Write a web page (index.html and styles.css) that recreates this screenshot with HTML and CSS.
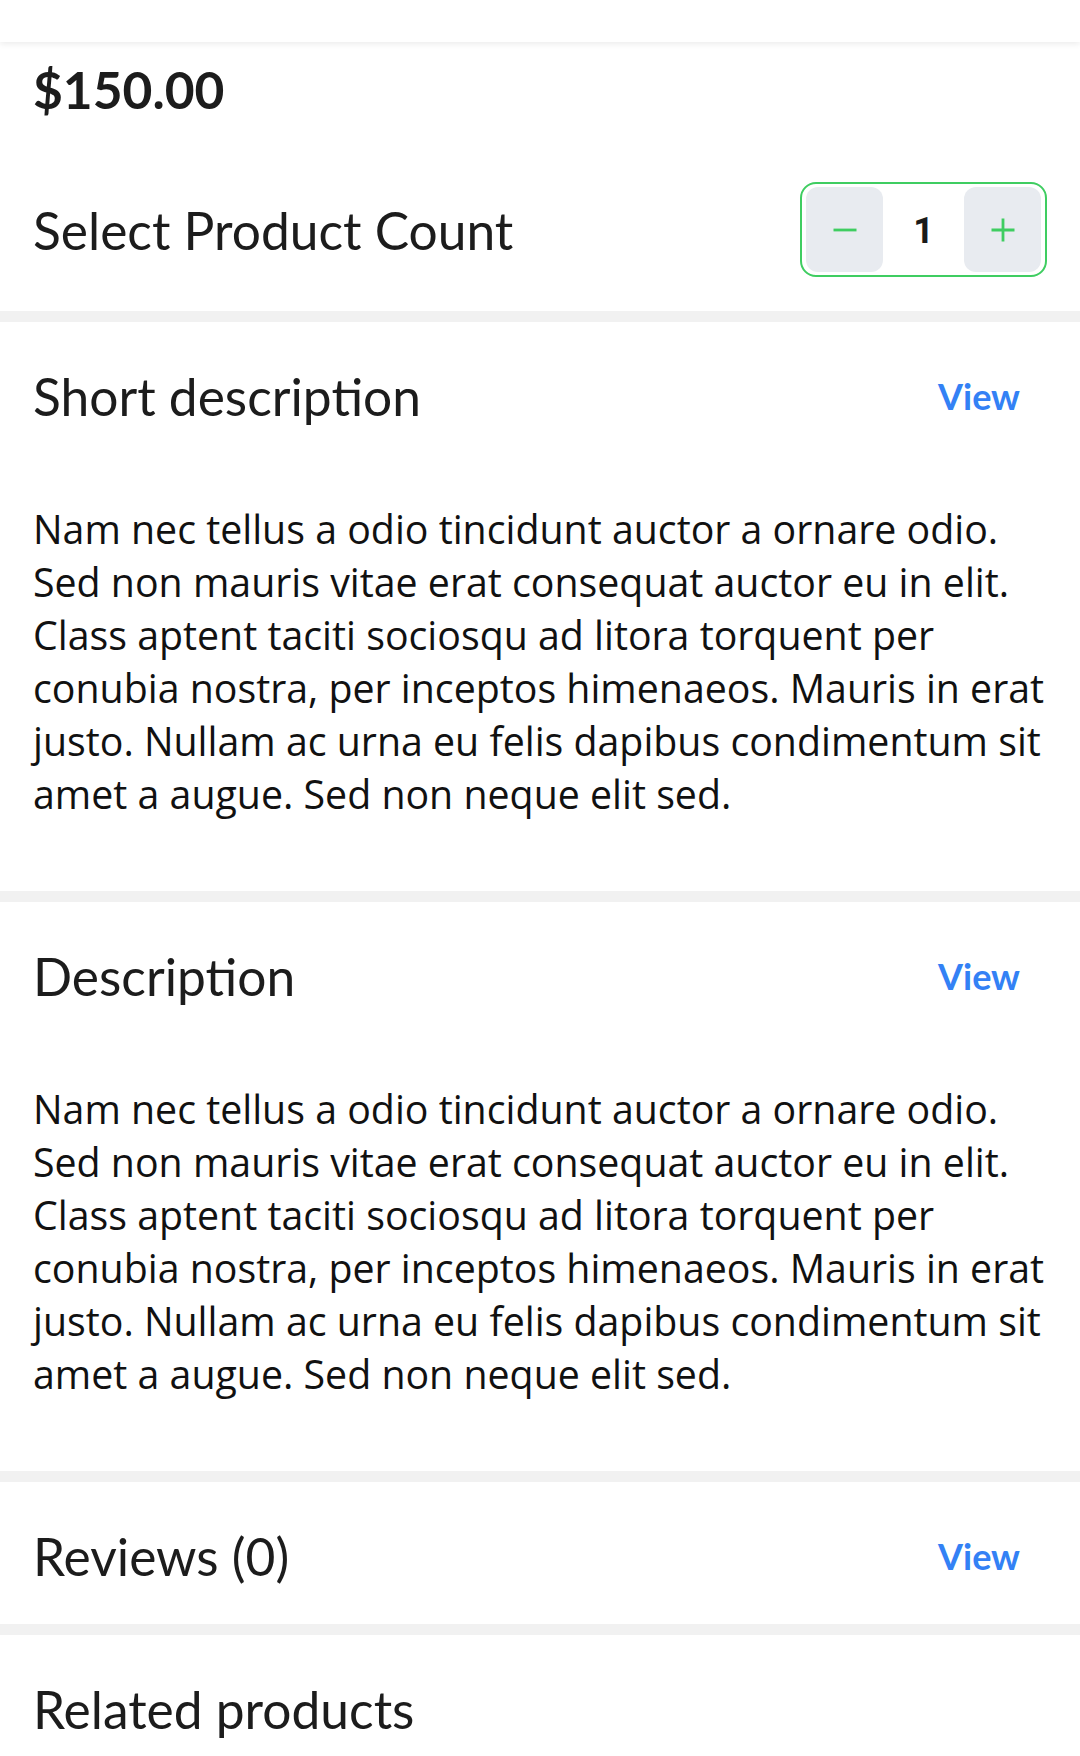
FILE: index.html
```html
<!DOCTYPE html>
<html lang="en">
<head>
<meta charset="utf-8">
<title>Product</title>
<link rel="stylesheet" href="styles.css">
</head>
<body>
<header class="topbar"></header>
<main>
  <section class="panel summary">
    <div class="price">$150.00</div>
    <div class="count-row">
      <h2 class="title">Select Product Count</h2>
      <div class="stepper">
        <button class="step" aria-label="decrease">
          <svg width="24" height="24" viewBox="0 0 24 24"><path d="M0.5 12h23" stroke="#3fcd61" stroke-width="2.8"/></svg>
        </button>
        <span class="qty">1</span>
        <button class="step" aria-label="increase">
          <svg width="24" height="24" viewBox="0 0 24 24"><path d="M0.5 12h23M12 0.5v23" stroke="#3fcd61" stroke-width="2.8"/></svg>
        </button>
      </div>
    </div>
  </section>
  <section class="panel acc">
    <div class="acc-head"><h2 class="title">Short description</h2><a class="view">View</a></div>
    <p class="acc-body">Nam nec tellus a odio tincidunt auctor a ornare odio. Sed non mauris vitae erat consequat auctor eu in elit. Class aptent taciti sociosqu ad litora torquent per conubia nostra, per inceptos himenaeos. Mauris in erat justo. Nullam ac urna eu felis dapibus condimentum sit amet a augue. Sed non neque elit sed.</p>
  </section>
  <section class="panel acc">
    <div class="acc-head"><h2 class="title">Description</h2><a class="view">View</a></div>
    <p class="acc-body">Nam nec tellus a odio tincidunt auctor a ornare odio. Sed non mauris vitae erat consequat auctor eu in elit. Class aptent taciti sociosqu ad litora torquent per conubia nostra, per inceptos himenaeos. Mauris in erat justo. Nullam ac urna eu felis dapibus condimentum sit amet a augue. Sed non neque elit sed.</p>
  </section>
  <section class="panel acc reviews">
    <div class="acc-head"><h2 class="title">Reviews (0)</h2><a class="view">View</a></div>
  </section>
  <section class="panel acc related">
    <div class="acc-head"><h2 class="title">Related products</h2></div>
  </section>
</main>
</body>
</html>
```
FILE: styles.css
```css
html, body {
  margin: 0;
  padding: 0;
  background: #f1f1f1;
}
body {
  width: 1080px;
  height: 1756px;
  overflow: hidden;
  font-family: "Lato", "Noto Sans", sans-serif;
  color: #1c1c1c;
}
.topbar {
  height: 42px;
  background: #fff;
  box-shadow: 0 2px 6px rgba(0, 0, 0, 0.08);
  position: relative;
  z-index: 1;
}
main {
  display: flex;
  flex-direction: column;
  gap: 11px;
}
.panel {
  background: #fff;
}
.summary {
  padding: 17px 33px 34px 33px;
}
.price {
  font-family: "Lato", sans-serif;
  font-weight: 700;
  font-size: 51.5px;
  line-height: 60px;
  color: #1c1c1c;
}
.count-row {
  margin-top: 63px;
  height: 95px;
  display: flex;
  align-items: center;
  justify-content: space-between;
}
.title {
  margin: 0;
  font-family: "Lato", sans-serif;
  font-weight: 400;
  font-size: 51.5px;
  line-height: 80px;
  color: #1c1c1c;
}
.stepper {
  box-sizing: border-box;
  width: 247px;
  height: 95px;
  border: 2px solid #3fcd61;
  border-radius: 16px;
  padding: 3px 4px;
  display: flex;
  align-items: center;
  justify-content: space-between;
}
.step {
  width: 77px;
  height: 85px;
  border: none;
  border-radius: 12px;
  background: #e8ebf0;
  display: flex;
  align-items: center;
  justify-content: center;
  padding: 0;
}
.qty {
  padding-top: 3px;
  font-family: "Roboto", sans-serif;
  font-weight: 700;
  font-size: 36px;
  color: #1a1a1a;
}
.acc {
  padding: 34px 33px 70px 33px;
}
.acc-head {
  height: 80px;
  display: flex;
  align-items: center;
  justify-content: space-between;
}
.view {
  margin-right: 27px;
  font-family: "Lato", sans-serif;
  font-weight: 700;
  font-size: 36px;
  color: #3381f5;
}
.acc-body {
  margin: 67px 0 0;
  font-family: "Open Sans", sans-serif;
  font-size: 39.3px;
  line-height: 53px;
  color: #111;
}
.reviews {
  padding-bottom: 28px;
}
.related {
  padding-bottom: 40px;
}
```
